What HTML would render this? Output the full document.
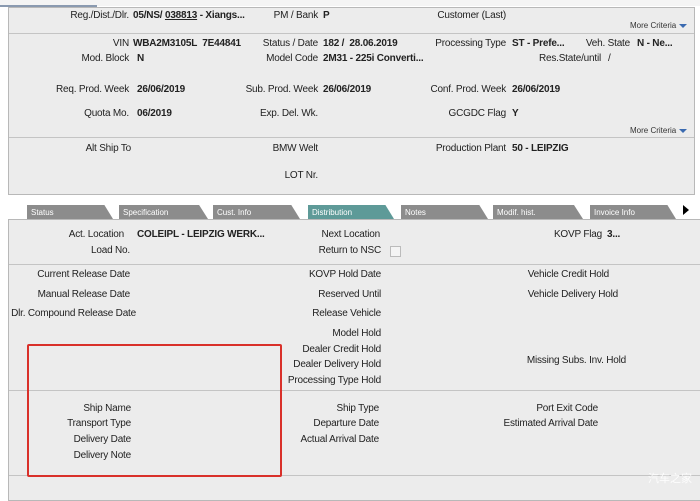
<!DOCTYPE html>
<html><head><meta charset="utf-8"><style>
body{margin:0;width:700px;height:486px;overflow:hidden;background:#fff;font-family:"Liberation Sans",Arial,sans-serif;font-size:10px;color:#222;position:relative}
.p{position:absolute;background:#ececec;border:1px solid #b8b8b8}
.l{position:absolute;white-space:nowrap;line-height:12px;text-align:right;letter-spacing:-0.2px}
.v{position:absolute;white-space:nowrap;line-height:12px;font-weight:bold;letter-spacing:-0.2px}
.hr{position:absolute;height:1px;background:#c4c4c4}
.mc{position:absolute;font-size:8px;color:#333;line-height:10px}
.mc:after{content:"";display:inline-block;margin-left:3px;border-left:4px solid transparent;border-right:4px solid transparent;border-top:4px solid #3a6ab0;vertical-align:middle}
.t{position:absolute;top:205px;height:14px;background:#8c8c8c;color:#fff;font-size:8px;line-height:15px;padding-left:4px;box-sizing:border-box;clip-path:polygon(0 0,90% 0,100% 100%,0 100%)}
</style></head><body>
<div style="position:absolute;left:0;top:0;width:700px;height:6px;background:#f4f4f4"></div>
<div style="position:absolute;left:0;top:5px;width:97px;height:2px;background:#8a9ab0"></div>
<div class="p" style="left:8px;top:7px;width:685px;height:186px"></div>
<div class="hr" style="left:9px;top:33px;width:685px"></div>
<div class="hr" style="left:9px;top:137px;width:685px"></div>

<div class="l" style="right:571px;top:10px">Reg./Dist./Dlr.</div><div class="v" style="left:133px;top:10px">05/NS/ <u>038813</u> - Xiangs...</div>
<div class="l" style="right:382px;top:10px">PM / Bank</div><div class="v" style="left:323px;top:10px">P</div>
<div class="l" style="right:194px;top:10px">Customer (Last)</div>
<div class="mc" style="left:630px;top:21px">More Criteria</div>

<div class="l" style="right:571px;top:38px">VIN</div><div class="v" style="left:133px;top:38px">WBA2M3105L&nbsp; 7E44841</div>
<div class="l" style="right:382px;top:38px">Status / Date</div><div class="v" style="left:323px;top:38px">182 /&nbsp; 28.06.2019</div>
<div class="l" style="right:194px;top:38px">Processing Type</div><div class="v" style="left:512px;top:38px">ST - Prefe...</div>
<div class="l" style="right:70px;top:38px">Veh. State</div><div class="v" style="left:637px;top:38px">N - Ne...</div>
<div class="l" style="right:571px;top:53px">Mod. Block</div><div class="v" style="left:137px;top:53px">N</div>
<div class="l" style="right:382px;top:53px">Model Code</div><div class="v" style="left:323px;top:53px">2M31 - 225i Converti...</div>
<div class="l" style="right:99px;top:53px">Res.State/until</div><div class="v" style="left:608px;top:53px;font-weight:normal">/</div>

<div class="l" style="right:571px;top:84px">Req. Prod. Week</div><div class="v" style="left:137px;top:84px">26/06/2019</div>
<div class="l" style="right:382px;top:84px">Sub. Prod. Week</div><div class="v" style="left:323px;top:84px">26/06/2019</div>
<div class="l" style="right:194px;top:84px">Conf. Prod. Week</div><div class="v" style="left:512px;top:84px">26/06/2019</div>
<div class="l" style="right:571px;top:108px">Quota Mo.</div><div class="v" style="left:137px;top:108px">06/2019</div>
<div class="l" style="right:382px;top:108px">Exp. Del. Wk.</div>
<div class="l" style="right:194px;top:108px">GCGDC Flag</div><div class="v" style="left:512px;top:108px">Y</div>
<div class="mc" style="left:630px;top:126px">More Criteria</div>

<div class="l" style="right:569px;top:143px">Alt Ship To</div>
<div class="l" style="right:382px;top:143px">BMW Welt</div>
<div class="l" style="right:194px;top:143px">Production Plant</div><div class="v" style="left:512px;top:143px">50 - LEIPZIG</div>
<div class="l" style="right:382px;top:170px">LOT Nr.</div>

<div class="t" style="left:27px;width:86px">Status</div>
<div class="t" style="left:119px;width:89px">Specification</div>
<div class="t" style="left:213px;width:87px">Cust. Info</div>
<div class="t" style="left:308px;width:86px;background:#5e9a98">Distribution</div>
<div class="t" style="left:401px;width:87px">Notes</div>
<div class="t" style="left:493px;width:90px">Modif. hist.</div>
<div class="t" style="left:590px;width:86px">Invoice Info</div>
<div style="position:absolute;left:683px;top:205px;border-top:5px solid transparent;border-bottom:5px solid transparent;border-left:6px solid #000"></div>

<div class="p" style="left:8px;top:219px;width:700px;height:280px;border-right:none"></div>
<div class="hr" style="left:9px;top:264px;width:691px"></div>
<div class="hr" style="left:9px;top:390px;width:691px"></div>
<div class="hr" style="left:9px;top:475px;width:691px"></div>

<div class="l" style="right:576px;top:229px">Act. Location</div><div class="v" style="left:137px;top:229px">COLEIPL - LEIPZIG WERK...</div>
<div class="l" style="right:320px;top:229px">Next Location</div>
<div class="l" style="right:98px;top:229px">KOVP Flag</div><div class="v" style="left:607px;top:229px">3...</div>
<div class="l" style="right:570px;top:245px">Load No.</div>
<div class="l" style="right:319px;top:245px">Return to NSC</div>
<div style="position:absolute;left:390px;top:246px;width:9px;height:9px;border:1px solid #bbb;background:#f4f4f4"></div>

<div class="l" style="right:570px;top:269px">Current Release Date</div>
<div class="l" style="right:319px;top:269px">KOVP Hold Date</div>
<div class="l" style="right:91px;top:269px">Vehicle Credit Hold</div>
<div class="l" style="right:570px;top:289px">Manual Release Date</div>
<div class="l" style="right:319px;top:289px">Reserved Until</div>
<div class="l" style="right:82px;top:289px">Vehicle Delivery Hold</div>
<div class="l" style="right:564px;top:308px">Dlr. Compound Release Date</div>
<div class="l" style="right:319px;top:308px">Release Vehicle</div>
<div class="l" style="right:319px;top:328px">Model Hold</div>
<div class="l" style="right:319px;top:344px">Dealer Credit Hold</div>
<div class="l" style="right:319px;top:359px">Dealer Delivery Hold</div>
<div class="l" style="right:319px;top:375px">Processing Type Hold</div>
<div class="l" style="right:74px;top:355px">Missing Subs. Inv. Hold</div>

<div class="l" style="right:569px;top:403px">Ship Name</div>
<div class="l" style="right:569px;top:418px">Transport Type</div>
<div class="l" style="right:569px;top:434px">Delivery Date</div>
<div class="l" style="right:569px;top:450px">Delivery Note</div>
<div class="l" style="right:321px;top:403px">Ship Type</div>
<div class="l" style="right:321px;top:418px">Departure Date</div>
<div class="l" style="right:321px;top:434px">Actual Arrival Date</div>
<div class="l" style="right:102px;top:403px">Port Exit Code</div>
<div class="l" style="right:102px;top:418px">Estimated Arrival Date</div>

<div style="position:absolute;left:27px;top:344px;width:251px;height:129px;border:2px solid #d9302a;border-radius:2px"></div>
<div style="position:absolute;left:648px;top:470px;color:#fff;font-size:11px;font-family:'Noto Sans CJK SC',sans-serif;opacity:.9">汽车之家</div>
</body></html>
